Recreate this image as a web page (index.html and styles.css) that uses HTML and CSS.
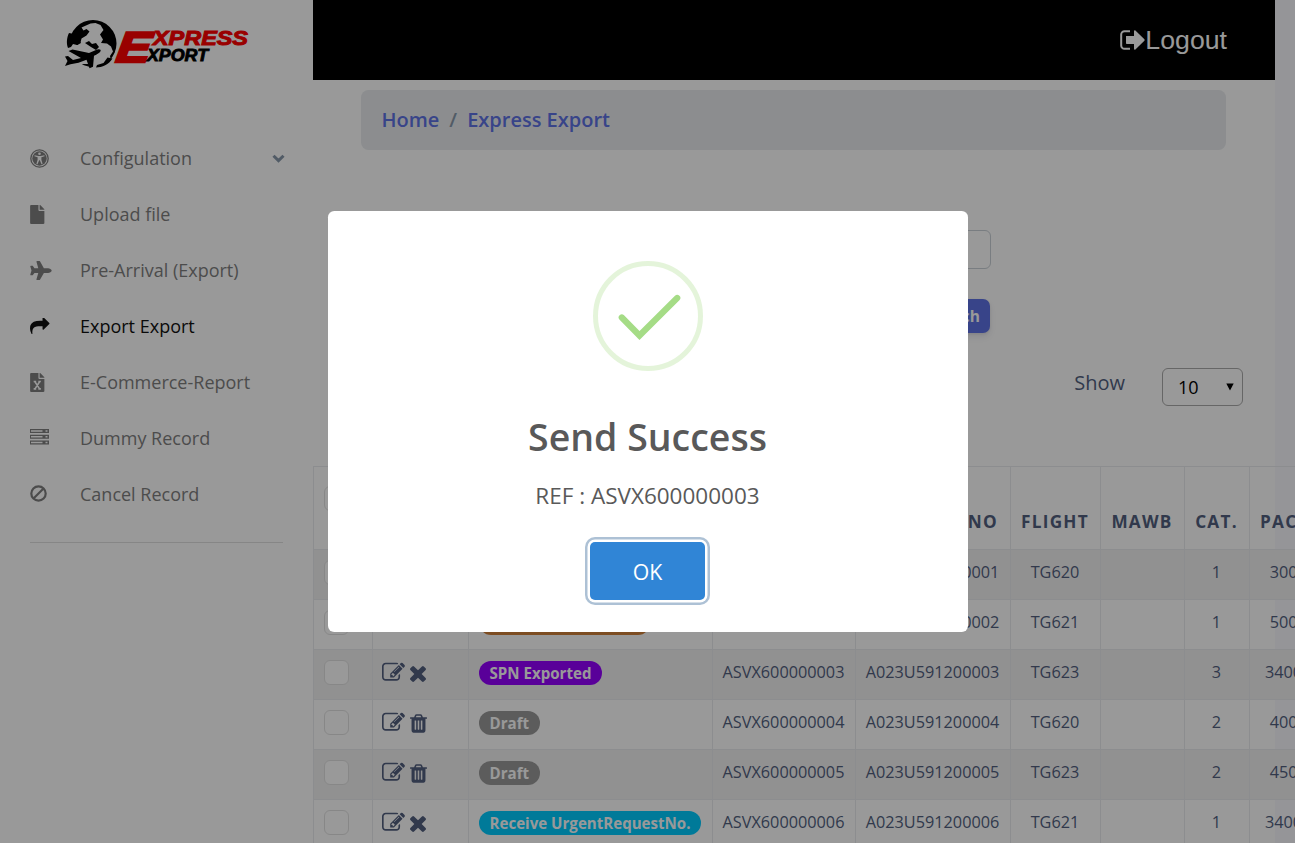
FILE: index.html
```html
<!DOCTYPE html>
<html lang="en">
<head>
<meta charset="utf-8">
<title>Express Export</title>
<link rel="stylesheet" href="styles.css">
</head>
<body>
<svg class="defs" aria-hidden="true">
  <symbol id="edit" viewBox="0 0 1792 1792"><path d="M888 1184l116-116-152-152-116 116v56h96v96h56zm440-720q-16-16-33 1l-350 350q-17 17-1 33t33-1l350-350q17-17 1-33zm80 594v190q0 119-84.5 203.5t-203.5 84.5h-832q-119 0-203.5-84.5t-84.5-203.5v-832q0-119 84.5-203.5t203.5-84.5h832q63 0 117 25 15 7 18 23 3 17-9 29l-49 49q-14 14-32 8-23-6-45-6h-832q-66 0-113 47t-47 113v832q0 66 47 113t113 47h832q66 0 113-47t47-113v-126q0-13 9-22l64-64q15-15 35-7t20 29zm-96-738l288 288-672 672h-288v-288zm444 132l-92 92-288-288 92-92q28-28 68-28t68 28l152 152q28 28 28 68t-28 68z"/></symbol>
  <symbol id="times" viewBox="302 366 1188 1188"><path d="M1490 1322q0 40-28 68l-136 136q-28 28-68 28t-68-28l-294-294-294 294q-28 28-68 28t-68-28l-136-136q-28-28-28-68t28-68l294-294-294-294q-28-28-28-68t28-68l136-136q28-28 68-28t68 28l294 294 294-294q28-28 68-28t68 28l136 136q28 28 28 68t-28 68l-294 294 294 294q28 28 28 68z"/></symbol>
  <symbol id="trash" viewBox="192 128 1408 1536"><path d="M704 1376v-704q0-14-9-23t-23-9h-64q-14 0-23 9t-9 23v704q0 14 9 23t23 9h64q14 0 23-9t9-23zm256 0v-704q0-14-9-23t-23-9h-64q-14 0-23 9t-9 23v704q0 14 9 23t23 9h64q14 0 23-9t9-23zm256 0v-704q0-14-9-23t-23-9h-64q-14 0-23 9t-9 23v704q0 14 9 23t23 9h64q14 0 23-9t9-23zm-544-992h448l-48-117q-7-9-17-11h-317q-10 2-17 11zm928 32v64q0 14-9 23t-23 9h-96v948q0 83-47 143.5t-113 60.5h-832q-66 0-113-58.5t-47-141.5v-952h-96q-14 0-23-9t-9-23v-64q0-14 9-23t23-9h309l70-167q15-37 54-63t79-26h320q40 0 79 26t54 63l70 167h309q14 0 23 9t9 23z"/></symbol>
</svg>

<div class="layout">
  <aside class="sidebar">
    <svg class="logo" viewBox="0 0 190 54" role="img" aria-label="Express Export">
      <circle cx="28" cy="24.500" r="23.500"/>
      <path class="land" d="M25.500 4.500l5-.5 5 2 3 5-3.500 4.500 3 5-2 3.500 6 .5 4 3 2 5-3 4.500 1 5-6 6-9 4-6-1 1-6H12l-8-4c-2-6-2-11-.5-16l3 1 2-2.500 4 2.500 3-2.500 1-4 5-3 3-4-3-2.500-3 1.500-2-3z"/>
      <path d="M4 14l5 1 1 4 4 2 2 3-4 2-4-1-2 3-3 1C1 24 2 18 4 14z"/>
      <path d="M20 24l4-2 3 3 4-1 3 4-3 3-5-3z"/>
      <path d="M0 47l2.500-5L0 37.500l3-.5 5 4 8-2-12.500-7 4-1.500L24 34l7-3c3-1.300 5.500-.5 4.500 1.200-.8 1.500-3.500 3-6.500 4.500l-1 11-3.500 1.500-3-8.500-8 3-8 1.500z"/>
      <path d="M31 48.500c6 0 13-3 16.500-9l-5-1-4 5.500-6.500 2z"/>
      <text class="logo-e" transform="translate(50 43) skewX(-8)" textLength="34" lengthAdjust="spacingAndGlyphs">E</text>
      <text class="logo-top" x="88" y="26" textLength="95" lengthAdjust="spacingAndGlyphs">XPRESS</text>
      <text class="logo-bottom" x="82" y="42" textLength="61" lengthAdjust="spacingAndGlyphs">XPORT</text>
    </svg>
    <nav class="menu">
      <a class="item">
        <span class="ico"><svg width="19" height="19" viewBox="0 0 19 19"><circle cx="9.500" cy="9.500" r="8.700" fill="none" stroke="currentColor" stroke-width="1.300"/><circle cx="9.500" cy="9.500" r="7.200"/><g class="cut"><circle cx="9.500" cy="4.700" r="1.300"/><path d="M4.600 6.300l3.600.8h2.600l3.600-.8.2 1-3.200.9v2.500l1.200 4.200-1.100.4-1.700-4h-.6l-1.700 4-1.100-.4 1.200-4.200V8.200l-3.200-.9z"/></g></svg></span>
        <span>Configulation</span>
        <svg class="chevron" width="13" height="9" viewBox="0 0 13 9"><path d="M1.500 1.700l5 4.900 5-4.900" fill="none" stroke="currentColor" stroke-width="3"/></svg>
      </a>
      <a class="item"><span class="ico"><svg width="14.500" height="19" viewBox="0 0 384 512"><path d="M224 136V0H24C10.700 0 0 10.700 0 24v464c0 13.300 10.700 24 24 24h336c13.300 0 24-10.700 24-24V160H248c-13.200 0-24-10.800-24-24zm160-14.100v6.100H256V0h6.100c6.400 0 12.500 2.500 17 7l97.900 98c4.500 4.500 7 10.600 7 16.900z"/></svg></span><span>Upload file</span></a>
      <a class="item"><span class="ico"><svg width="22" height="19" viewBox="0 0 576 512"><path d="M480 192H365.710L260.610 8.060A16.014 16.014 0 0 0 246.710 0h-65.500c-10.630 0-18.300 10.170-15.380 20.390L214.860 192H112l-43.200-57.600c-3.020-4.030-7.770-6.400-12.800-6.400H16.010C5.600 128-2.040 137.780.49 147.880L32 256 .49 364.120C-2.040 374.220 5.600 384 16.010 384H56c5.040 0 9.780-2.370 12.800-6.400L112 320h102.860l-49.030 171.600c-2.920 10.220 4.750 20.400 15.380 20.400h65.500c5.740 0 11.040-3.080 13.890-8.060L365.710 320H480c35.350 0 96-28.650 96-64s-60.650-64-96-64z"/></svg></span><span>Pre-Arrival (Export)</span></a>
      <a class="item active"><span class="ico"><svg width="19.500" height="16.500" viewBox="0 128 1792 1536" preserveAspectRatio="none"><path d="M1792 640q0 26-19 45l-512 512q-19 19-45 19t-45-19-19-45v-256h-224q-98 0-175.500 6t-154 21.500-133 42.500-105.500 69.500-80 101-48.500 138.500-17.500 181q0 55 5 123 0 6 2.500 23.500t2.500 26.500q0 15-8.500 25t-23.500 10q-16 0-28-17-7-9-13-22t-13.500-30-10.500-24q-127-285-127-451 0-199 53-333 162-403 875-403h224v-256q0-26 19-45t45-19 45 19l512 512q19 19 19 45z"/></svg></span><span>Export Export</span></a>
      <a class="item"><span class="ico"><svg width="14.500" height="19" viewBox="0 0 384 512"><path d="M224 136V0H24C10.700 0 0 10.700 0 24v464c0 13.300 10.700 24 24 24h336c13.300 0 24-10.700 24-24V160H248c-13.200 0-24-10.800-24-24zm160-14.100v6.100H256V0h6.100c6.400 0 12.500 2.500 17 7l97.900 98c4.500 4.500 7 10.600 7 16.900z"/><path d="M125 228l128 200M259 228L131 428M95 228h68M221 228h68M95 428h68M221 428h68" fill="none" stroke="#fff" stroke-width="42"/></svg></span><span>E-Commerce-Report</span></a>
      <a class="item server"><span class="ico"><svg width="19" height="16" viewBox="0 0 19 16"><path fill-rule="evenodd" d="M0 0h19v4H0zM1 1.200h11.500v1.500H1zM15.500 1.200h2v1.500h-2zM0 5.700h19v4H0zM1 7h11.500v1.400H1zM15.500 7h2v1.400h-2zM0 11.500h19v4H0zM1 12.700h11.500v1.500H1zM15.500 12.700h2v1.500h-2z"/></svg></span><span>Dummy Record</span></a>
      <a class="item ban"><span class="ico"><svg class="line" width="17" height="17" viewBox="0 0 17 17" stroke="currentColor" stroke-width="2.200"><circle cx="8.500" cy="8.500" r="7.200"/><path d="M3.500 13.500l10-10"/></svg></span><span>Cancel Record</span></a>
    </nav>
    <hr class="rule">
  </aside>

  <main class="main">
    <header class="topbar"><a class="logout"><svg width="25" height="20" viewBox="0 0 25 20"><path d="M10 1.200H4.500A3.300 3.300 0 0 0 1.200 4.500v11a3.300 3.300 0 0 0 3.300 3.300H10" fill="none" stroke="currentColor" stroke-width="2"/><path d="M6 6h8V1.200c0-.8.800-1.200 1.400-.6l9 8.700c.4.400.4 1 0 1.400l-9 8.700c-.6.600-1.400.2-1.400-.6V14H6.800a.8.800 0 0 1-.8-.8z"/></svg><span>Logout</span></a></header>
    <nav class="crumbs"><a>Home</a><span class="slash">/</span><a>Express Export</a></nav>
    <form class="search">
      <div class="field"></div>
      <button class="go" type="button">Search</button>
    </form>
    <div class="pager"><span>Show</span><div class="select"><span>10</span><svg width="8" height="8" viewBox="0 0 8 8"><path d="M.3.500h7.400L4 7.500z"/></svg></div></div>
    <table class="grid">
      <colgroup><col class="c1"><col class="c2"><col class="c3"><col class="c4"><col class="c5"><col class="c6"><col class="c7"><col class="c8"><col class="c9"></colgroup>
      <thead><tr><th class="chk"><i class="box"></i></th><th></th><th>Status</th><th>Ref No</th><th class="right">Dec No</th><th>Flight</th><th>MAWB</th><th>Cat.</th><th class="left">Package</th></tr></thead>
      <tbody>
        <tr><td class="chk"><i class="box"></i></td><td class="act"><svg class="e"><use href="#edit"/></svg><svg class="x"><use href="#times"/></svg></td><td></td><td>ASVX600000001</td><td>A023U591200001</td><td>TG620</td><td></td><td>1</td><td>300.00</td></tr>
        <tr><td class="chk"><i class="box"></i></td><td class="act"><svg class="e"><use href="#edit"/></svg><svg class="x"><use href="#times"/></svg></td><td class="st"><span class="badge orange"></span></td><td>ASVX600000002</td><td>A023U591200002</td><td>TG621</td><td></td><td>1</td><td>500.00</td></tr>
        <tr><td class="chk"><i class="box"></i></td><td class="act"><svg class="e"><use href="#edit"/></svg><svg class="x"><use href="#times"/></svg></td><td class="st"><span class="badge purple">SPN Exported</span></td><td>ASVX600000003</td><td>A023U591200003</td><td>TG623</td><td></td><td>3</td><td>3400.00</td></tr>
        <tr><td class="chk"><i class="box"></i></td><td class="act"><svg class="e"><use href="#edit"/></svg><svg class="t"><use href="#trash"/></svg></td><td class="st"><span class="badge gray">Draft</span></td><td>ASVX600000004</td><td>A023U591200004</td><td>TG620</td><td></td><td>2</td><td>400.00</td></tr>
        <tr><td class="chk"><i class="box"></i></td><td class="act"><svg class="e"><use href="#edit"/></svg><svg class="t"><use href="#trash"/></svg></td><td class="st"><span class="badge gray">Draft</span></td><td>ASVX600000005</td><td>A023U591200005</td><td>TG623</td><td></td><td>2</td><td>450.00</td></tr>
        <tr><td class="chk"><i class="box"></i></td><td class="act"><svg class="e"><use href="#edit"/></svg><svg class="x"><use href="#times"/></svg></td><td class="st"><span class="badge cyan">Receive UrgentRequestNo.</span></td><td>ASVX600000006</td><td>A023U591200006</td><td>TG621</td><td></td><td>1</td><td>3400.00</td></tr>
      </tbody>
    </table>
  </main>
</div>

<div class="overlay">
  <div class="modal" role="dialog">
    <svg class="line" width="110" height="110" viewBox="0 0 110 110"><circle cx="55" cy="55" r="52.500" stroke="#a5dc86" stroke-opacity=".3" stroke-width="5"/><path d="M28.800 56.500L46.500 74.500 84.200 37" stroke="#a5dc86" stroke-width="6.250" stroke-linecap="round"/></svg>
    <h2 class="title">Send Success</h2>
    <div class="text">REF : ASVX600000003</div>
    <button class="ok" type="button">OK</button>
  </div>
</div>
</body>
</html>
```
FILE: styles.css
```css
* { box-sizing: border-box; }
body {
  margin: 0;
  height: 843px;
  overflow: hidden;
  background: #f8f9fe;
  color: #525f7f;
  font: 400 20px/1.5 "Open Sans", sans-serif;
}
svg { fill: currentColor; display: block; flex: none; }
svg.line { fill: none; }
.defs { display: none; }
.layout { display: flex; width: 1275px; height: 843px; background: #fff; }

.sidebar { flex: none; width: 313px; padding: 19px 30px 0; }
.logo { width: 190px; height: 54px; margin-left: 35px; color: #000; overflow: visible; }
.land { fill: #fff; }
.logo text { font-family: "Liberation Sans", sans-serif; font-weight: 700; font-style: italic; }
.logo-e { font-size: 43px; fill: #f00; stroke: #f00; stroke-width: 2.5px; }
.logo-top { font-size: 20px; fill: #f00; stroke: #f00; stroke-width: 1px; }
.logo-bottom { font-size: 16px; fill: #000; stroke: #000; stroke-width: .8px; }
.menu { margin-top: 57px; }
.item { display: flex; align-items: center; height: 56px; font-size: 18px; color: #7f7f7f; }
.item.active { color: #111; }
.ico { width: 50px; flex: none; }
.cut { fill: #fff; }
.server .ico, .ban .ico { padding-bottom: 2px; }
.chevron { margin-left: auto; margin-right: -2px; color: #8898aa; }
.rule { height: 1px; margin: 20px 0 0; border: 0; background: #e0e0e0; }

.main { flex: none; width: 962px; display: flex; flex-direction: column; align-items: stretch; }
.topbar { flex: none; height: 80px; display: flex; align-items: center; justify-content: flex-end; padding: 0 48px 0 0; background: #000; color: #fff; }
.logout { display: flex; align-items: center; font: 400 26.7px/40px "Liberation Sans", sans-serif; }
.crumbs { flex: none; display: flex; align-items: center; height: 60px; margin: 10px 49px 0 48px; padding: 0 20.5px; border-radius: 7.5px; background: #e9ecef; font-weight: 600; font-size: 20px; color: #5e72e4; }
.slash { margin: 0 10px; color: #8898aa; }
.search { flex: none; width: 340px; margin: 80px 0 0 338px; display: flex; flex-direction: column; align-items: flex-end; }
.field { width: 340px; height: 39px; border: 1px solid #cad1d7; border-radius: 6px; }
.go { height: 34px; margin: 30px 1px 0 0; padding: 0 10px; border: 0; border-radius: 7px; background: #5e72e4; color: #fff; font: 700 15.5px/34px "Open Sans", sans-serif; box-shadow: 0 4px 6px rgba(50,50,93,.11), 0 1px 3px rgba(0,0,0,.08); }
.pager { flex: none; display: flex; justify-content: flex-end; gap: 37px; margin: 35px 32px 0 0; }
.select { display: flex; justify-content: space-between; align-items: center; width: 81px; height: 38px; padding: 0 8px 0 15px; border: 1px solid #aaa; border-radius: 6px; color: #000; font-size: 18px; }

.grid { flex: none; width: 1026px; margin-top: 60px; border-collapse: collapse; table-layout: fixed; color: #525f7f; }
.c1 { width: 59px; } .c2 { width: 96px; } .c3 { width: 244px; } .c4 { width: 143px; } .c5 { width: 155px; }
.c6 { width: 90px; } .c7 { width: 84px; } .c8 { width: 65px; } .c9 { width: 90px; }
.grid th, .grid td { border: 1px solid #e9ecef; padding: 0 1px 0 0; text-align: center; white-space: nowrap; }
.grid th { height: 83px; padding-top: 27px; font-size: 17.2px; font-weight: 700; letter-spacing: 1.250px; text-transform: uppercase; }
.grid th.right { text-align: right; padding-right: 12px; }
.grid th.left { text-align: left; padding-left: 10px; }
.grid td { height: 50px; padding-bottom: 6px; font-size: 16.250px; line-height: 24px; }
.grid td:last-child { padding-right: 0; padding-left: 1px; }
.grid tbody tr:nth-child(odd) { background: #f2f2f2; }
.grid .chk { padding: 10px 0 0 10px; vertical-align: top; }
.grid th.chk { padding-top: 19px; }
.box { display: block; width: 25px; height: 25px; border: 1px solid #e2e2e2; border-radius: 6px; background: #fff; }
.grid .act { padding: 0 0 4px 9px; text-align: left; vertical-align: middle; font-size: 0; }
.act svg { display: inline-block; vertical-align: middle; color: #525f7f; }
.e { width: 23px; height: 23px; }
.x { width: 16px; height: 16px; margin: 2px 0 0 5px; }
.t { width: 17px; height: 19px; margin: 1px 0 0 5px; }
.grid .st { text-align: left; padding: 0 0 4px 10px; }
.badge { display: block; width: max-content; height: 24px; padding: 0 10.5px; border-radius: 12px; color: #fff; font-size: 15.100px; font-weight: 700; line-height: 24px; }
.orange { width: 171px; background: #d0813a; }
.purple { background: #9400ff; }
.gray { background: #999; }
.cyan { background: #00cbff; }

.overlay { position: fixed; inset: 0; display: flex; align-items: center; justify-content: center; background: rgba(0,0,0,.4); }
.modal { display: flex; flex-direction: column; align-items: center; width: 640px; height: 421px; padding-top: 50px; border-radius: 6.250px; background: #fff; color: #595959; }
.title { margin: 38px 0 0; font-size: 37.500px; font-weight: 600; line-height: 56px; }
.text { margin-top: 14px; font-size: 22.500px; line-height: 34px; }
.ok { width: 115px; height: 58px; margin-top: 29px; border: 0; border-radius: 5px; background: #3085d6; color: #fff; font: 400 21.250px/58px "Open Sans", sans-serif; box-shadow: 0 0 0 2.500px #fff, 0 0 0 5px rgba(50,100,150,.4); }
```
